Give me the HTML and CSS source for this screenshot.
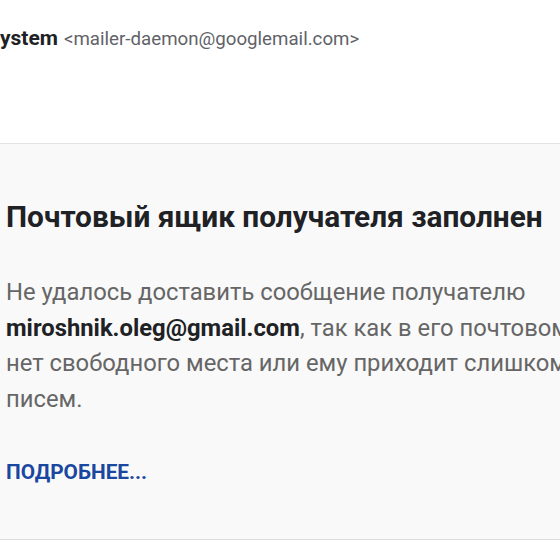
FILE: index.html
```html
<!DOCTYPE html>
<html lang="ru">
<head>
<meta charset="utf-8">
<link rel="stylesheet" href="styles.css">
</head>
<body>
<div class="header">
  <span class="name">ystem</span>
  <span class="email">&lt;mailer-daemon@googlemail.com&gt;</span>
</div>
<div class="panel">
  <h1 class="title">Почтовый ящик получателя заполнен</h1>
  <p class="text">Не удалось доставить сообщение получателю<br><b class="addr">miroshnik.oleg@gmail.com</b>, так как в его почтовом ящике<br>нет свободного места или ему приходит слишком много<br>писем.</p>
  <a class="more" href="#">ПОДРОБНЕЕ...</a>
</div>
</body>
</html>
```
FILE: styles.css
```css
html, body {
  margin: 0;
  padding: 0;
  background: #ffffff;
  width: 560px;
  overflow: hidden;
}
body {
  font-family: Roboto, "Noto Sans", sans-serif;
}
.header {
  height: 143px;
  box-sizing: border-box;
  padding-top: 25px;
  white-space: nowrap;
  line-height: 26px;
}
.name {
  font-weight: 700;
  font-size: 21px;
  color: #202124;
}
.email {
  font-size: 18.7px;
  color: #5f6368;
  margin-left: 2px;
}
.panel {
  border-top: 1px solid #e3e3e3;
  border-bottom: 1px solid #dcdcdc;
  background: #f9f9f9;
  height: 397px;
  box-sizing: border-box;
  padding: 56px 0 0 6px;
  white-space: nowrap;
  overflow: hidden;
}
.title {
  margin: 0;
  font-size: 29.8px;
  font-weight: 700;
  line-height: 34px;
  color: #202124;
}
.text {
  margin: 41px 0 0 0;
  font-size: 23.8px;
  line-height: 35.7px;
  color: #666666;
}
.addr {
  color: #202124;
  font-weight: 700;
}
.more {
  display: inline-block;
  margin-top: 42px;
  font-size: 20.8px;
  font-weight: 700;
  color: #1a47a0;
  text-decoration: none;
}
```
